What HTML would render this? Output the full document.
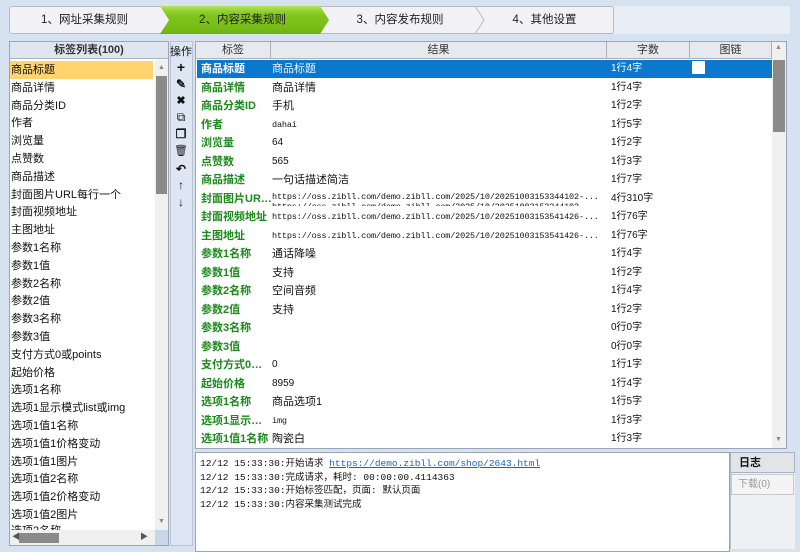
<!DOCTYPE html>
<html><head><meta charset="utf-8"><style>
*{margin:0;padding:0;box-sizing:border-box}
body{width:800px;height:549px;overflow:hidden;background:#d6e2f0;font-family:"Liberation Sans","Noto Sans CJK SC",sans-serif;font-size:11px;color:#111;position:relative}
.a{position:absolute}
.tabs{left:9px;top:6px;width:605px;height:28px;background:#f2f2f4;border:1px solid #b8bcc4;border-radius:3px}
.tl{top:6px;height:28px;line-height:28px;font-size:11.5px;color:#222;text-align:center}
.panel{background:#fff;border:1px solid #9aa5b5}
.hdr{background:#e6e9ee;border-bottom:1px solid #a9b1bc;text-align:center;height:17px;line-height:17px;color:#333}
.li{left:11px;height:18px;line-height:18px;font-size:11px}
.r{left:197px;width:575px;height:18.5px;line-height:18.5px}
.r span{position:absolute;top:0;white-space:nowrap;overflow:hidden}
.k{left:4px;color:#1a8a1a;font-weight:bold;width:72px}
.v{left:75px;width:335px;font-size:10px}
.n{left:414px;font-size:10px}
.mono{font-family:"Liberation Mono","Noto Sans CJK SC",monospace;font-size:8.5px;letter-spacing:-0.15px}
.ic{left:170px;width:22px;text-align:center;font-size:12px;font-weight:bold}
.lg{left:200px;font-size:9.5px;font-family:"Liberation Mono","Noto Sans CJK SC",monospace}
</style></head><body>
<div class="a tabs"></div>
<div class="a" style="left:614px;top:6px;width:176px;height:28px;background:#e8eef6"></div>
<svg class="a" style="left:9px;top:6px" width="605" height="28">
<defs><linearGradient id="g" x1="0" y1="0" x2="0" y2="1"><stop offset="0" stop-color="#c6ee6a" stop-opacity=".8"/><stop offset=".5" stop-color="#7ac315" stop-opacity="0"/><stop offset="1" stop-color="#5da40b" stop-opacity=".6"/></linearGradient></defs>
<polygon points="151,0 311,0 320,14 311,28 151,28 160,14" fill="#7cc21a"/>
<polygon points="151,0 311,0 320,14 311,28 151,28 160,14" fill="url(#g)"/>
<polyline points="466,0 475,14 466,28" fill="none" stroke="#b8bcc4"/>
</svg>
<div class="a tl" style="left:9px;width:151px">1、网址采集规则</div>
<div class="a tl" style="left:165px;width:155px">2、内容采集规则</div>
<div class="a tl" style="left:325px;width:150px">3、内容发布规则</div>
<div class="a tl" style="left:475px;width:139px">4、其他设置</div>

<div class="a panel" style="left:9px;top:41px;width:160px;height:505px"></div>
<div class="a hdr" style="left:10px;top:42px;width:158px;font-weight:bold;background:#dfe6f0">标签列表(100)</div>
<div class="a" style="left:10px;top:61px;width:143px;height:18px;background:#ffd36e"></div>
<div class="a li" style="top:61px">商品标题</div>
<div class="a li" style="top:78.8px">商品详情</div>
<div class="a li" style="top:96.6px">商品分类ID</div>
<div class="a li" style="top:114.4px">作者</div>
<div class="a li" style="top:132.2px">浏览量</div>
<div class="a li" style="top:150px">点赞数</div>
<div class="a li" style="top:167.8px">商品描述</div>
<div class="a li" style="top:185.6px">封面图片URL每行一个</div>
<div class="a li" style="top:203.4px">封面视频地址</div>
<div class="a li" style="top:221.2px">主图地址</div>
<div class="a li" style="top:239px">参数1名称</div>
<div class="a li" style="top:256.8px">参数1值</div>
<div class="a li" style="top:274.6px">参数2名称</div>
<div class="a li" style="top:292.4px">参数2值</div>
<div class="a li" style="top:310.2px">参数3名称</div>
<div class="a li" style="top:328px">参数3值</div>
<div class="a li" style="top:345.8px">支付方式0或points</div>
<div class="a li" style="top:363.6px">起始价格</div>
<div class="a li" style="top:381.4px">选项1名称</div>
<div class="a li" style="top:399.2px">选项1显示模式list或img</div>
<div class="a li" style="top:417px">选项1值1名称</div>
<div class="a li" style="top:434.8px">选项1值1价格变动</div>
<div class="a li" style="top:452.6px">选项1值1图片</div>
<div class="a li" style="top:470.4px">选项1值2名称</div>
<div class="a li" style="top:488.2px">选项1值2价格变动</div>
<div class="a li" style="top:506px">选项1值2图片</div>
<div class="a li" style="top:522px;height:8px;overflow:hidden;line-height:18px">选项2名称</div>
<div class="a" style="left:155px;top:60px;width:13px;height:470px;background:#f0f0f0"></div>
<div class="a" style="left:156px;top:76px;width:11px;height:118px;background:#8a8a8a"></div>
<div class="a" style="left:158px;top:64px;font-size:7px;color:#888">▲</div>
<div class="a" style="left:158px;top:518px;font-size:7px;color:#888">▼</div>
<div class="a" style="left:10px;top:530px;width:145px;height:15px;background:#f0f0f0"></div>
<div class="a" style="left:19px;top:533px;width:40px;height:10px;background:#8a8a8a"></div>
<div class="a" style="left:12px;top:531px;font-size:8px;color:#555">◀</div>
<div class="a" style="left:140px;top:531px;font-size:8px;color:#555">▶</div>
<div class="a" style="left:155px;top:530px;width:13px;height:15px;background:#c9d6e8"></div>

<div class="a" style="left:170px;top:41px;width:23px;height:505px;background:#dde6f2;border:1px solid #b7c3d4"></div>
<div class="a ic" style="top:43px;font-weight:normal;font-size:11px">操作</div>
<div class="a ic" style="top:59px;font-size:14px">+</div>
<div class="a ic" style="top:77px">✎</div>
<div class="a ic" style="top:94px;font-size:11px">✖</div>
<div class="a ic" style="top:110px;font-weight:normal">⧉</div>
<div class="a ic" style="top:127px">❐</div>
<div class="a ic" style="top:144px;font-weight:normal;font-size:11px">🗑</div>
<div class="a ic" style="top:162px">↶</div>
<div class="a ic" style="top:178px">↑</div>
<div class="a ic" style="top:195px">↓</div>

<div class="a panel" style="left:195px;top:41px;width:592px;height:408px"></div>
<div class="a hdr" style="left:196px;top:42px;width:75px;border-right:1px solid #a9b1bc">标签</div>
<div class="a hdr" style="left:271px;top:42px;width:336px;border-right:1px solid #a9b1bc">结果</div>
<div class="a hdr" style="left:607px;top:42px;width:83px;border-right:1px solid #a9b1bc">字数</div>
<div class="a hdr" style="left:690px;top:42px;width:82px;border-right:1px solid #a9b1bc">图链</div>
<div class="a" style="left:772px;top:42px;width:14px;height:406px;background:#f0f0f0"></div>
<div class="a" style="left:773px;top:60px;width:12px;height:72px;background:#8a8a8a"></div>
<div class="a" style="left:775px;top:44px;font-size:7px;color:#888">▲</div>
<div class="a" style="left:775px;top:436px;font-size:7px;color:#888">▼</div>
<div class="a" style="left:197px;top:60px;width:575px;height:18px;background:#0a78cc"></div>
<div class="a" style="left:692px;top:61px;width:13px;height:13px;background:#fff"></div>
<div class="a r" style="top:60px;color:#fff"><span class="k" style="color:#fff">商品标题</span><span class="v" style="font-size:11px;color:#e8f2ff">商品标题</span><span class="n">1行4字</span></div>
<div class="a r" style="top:78.5px"><span class="k">商品详情</span><span class="v" style="font-size:11px">商品详情</span><span class="n">1行4字</span></div>
<div class="a r" style="top:97px"><span class="k">商品分类ID</span><span class="v" style="font-size:11px">手机</span><span class="n">1行2字</span></div>
<div class="a r" style="top:115.5px"><span class="k">作者</span><span class="v mono">dahai</span><span class="n">1行5字</span></div>
<div class="a r" style="top:134px"><span class="k">浏览量</span><span class="v">64</span><span class="n">1行2字</span></div>
<div class="a r" style="top:152.5px"><span class="k">点赞数</span><span class="v">565</span><span class="n">1行3字</span></div>
<div class="a r" style="top:171px"><span class="k">商品描述</span><span class="v" style="font-size:11px">一句话描述简洁</span><span class="n">1行7字</span></div>
<div class="a r" style="top:189.5px;overflow:hidden"><span class="k">封面图片UR…</span><span class="v mono" style="line-height:10px;top:2px;height:14px">https://oss.zibll.com/demo.zibll.com/2025/10/20251003153344102-...<br>https://oss.zibll.com/demo.zibll.com/2025/10/20251003153344102-</span><span class="n">4行310字</span></div>
<div class="a r" style="top:208px"><span class="k">封面视频地址</span><span class="v mono">https://oss.zibll.com/demo.zibll.com/2025/10/20251003153541426-...</span><span class="n">1行76字</span></div>
<div class="a r" style="top:226.5px"><span class="k">主图地址</span><span class="v mono">https://oss.zibll.com/demo.zibll.com/2025/10/20251003153541426-...</span><span class="n">1行76字</span></div>
<div class="a r" style="top:245px"><span class="k">参数1名称</span><span class="v" style="font-size:11px">通话降噪</span><span class="n">1行4字</span></div>
<div class="a r" style="top:263.5px"><span class="k">参数1值</span><span class="v" style="font-size:11px">支持</span><span class="n">1行2字</span></div>
<div class="a r" style="top:282px"><span class="k">参数2名称</span><span class="v" style="font-size:11px">空间音频</span><span class="n">1行4字</span></div>
<div class="a r" style="top:300.5px"><span class="k">参数2值</span><span class="v" style="font-size:11px">支持</span><span class="n">1行2字</span></div>
<div class="a r" style="top:319px"><span class="k">参数3名称</span><span class="v"></span><span class="n">0行0字</span></div>
<div class="a r" style="top:337.5px"><span class="k">参数3值</span><span class="v"></span><span class="n">0行0字</span></div>
<div class="a r" style="top:356px"><span class="k">支付方式0…</span><span class="v">0</span><span class="n">1行1字</span></div>
<div class="a r" style="top:374.5px"><span class="k">起始价格</span><span class="v">8959</span><span class="n">1行4字</span></div>
<div class="a r" style="top:393px"><span class="k">选项1名称</span><span class="v" style="font-size:11px">商品选项1</span><span class="n">1行5字</span></div>
<div class="a r" style="top:411.5px"><span class="k">选项1显示…</span><span class="v mono">img</span><span class="n">1行3字</span></div>
<div class="a r" style="top:430px;height:17px;overflow:hidden"><span class="k">选项1值1名称</span><span class="v" style="font-size:11px">陶瓷白</span><span class="n">1行3字</span></div>

<div class="a panel" style="left:195px;top:452px;width:535px;height:100px"></div>
<div class="a lg" style="top:455px">12/12 15:33:30:开始请求 <span style="color:#1a5fd0;text-decoration:underline">https://demo.zibll.com/shop/2643.html</span></div>
<div class="a lg" style="top:468.5px">12/12 15:33:30:完成请求，耗时: 00:00:00.4114363</div>
<div class="a lg" style="top:482px">12/12 15:33:30:开始标签匹配，页面: 默认页面</div>
<div class="a lg" style="top:495.5px">12/12 15:33:30:内容采集测试完成</div>
<div class="a" style="left:730px;top:452px;width:65px;height:97px;background:#eef0f3;border-left:1px solid #b7c3d4"></div>
<div class="a" style="left:730px;top:452px;width:65px;height:21px;background:#e2e4e8;border:1px solid #a9b1bc;font-weight:bold;line-height:20px;padding-left:8px">日志</div>
<div class="a" style="left:731px;top:474px;width:63px;height:21px;background:#f4f4f5;border:1px solid #c6cbd2;color:#999;line-height:20px;padding-left:6px;font-size:10px">下载(0)</div>
</body></html>
